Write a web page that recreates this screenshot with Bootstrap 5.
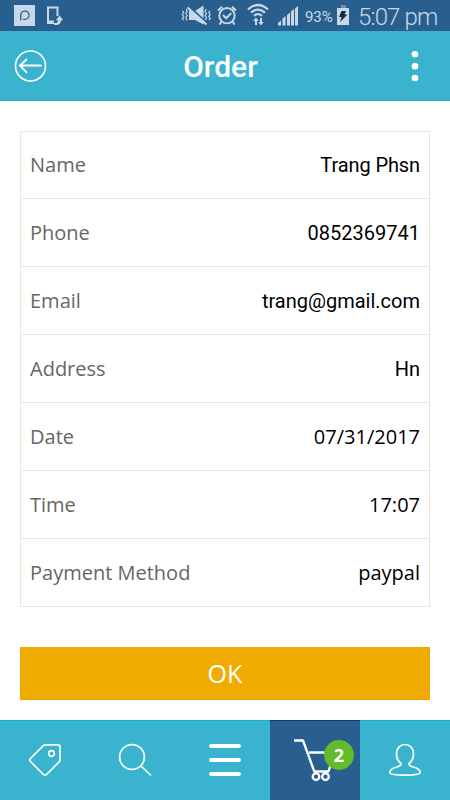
<!DOCTYPE html>
<html lang="en">
<head>
<meta charset="utf-8">
<meta name="viewport" content="width=device-width, initial-scale=1">
<title>Order</title>
<link href="https://cdn.jsdelivr.net/npm/bootstrap@5.3.0/dist/css/bootstrap.min.css" rel="stylesheet">
<style>
body{font-family:Roboto,sans-serif;height:800px;overflow:hidden;background:#fff}
svg{display:block;flex:none}
.status{height:31px;background:#295f8f;color:#c9d8e6;padding:0 12px 0 14px}
.status .pct{font-size:15px;width:28px;margin:0 4px 0 7px;line-height:35px;height:31px;letter-spacing:-.1px;white-space:nowrap}
.status .clock{font-size:24px;line-height:34px;height:31px;font-weight:300;width:80px;margin-left:9px;letter-spacing:-.85px;white-space:nowrap}
.topbar{height:70px;background:#3ab3cf;border-bottom:1px solid #14b1d1;color:#fff;padding:0 30px 0 14px}
.topbar h1{font-size:30px;font-weight:500;line-height:70px;padding:2px 0 0 7px}
.side{width:36px}
.order-list{--bs-list-group-border-color:#ebe6da;--bs-list-group-border-radius:0;margin:30px 20px 0}
.order-list .list-group-item{height:68px;padding:1px 9px 0;color:#000;font-size:20px}
.order-list .list-group-item:first-child{padding-top:0}
.order-list dt{font-family:"Open Sans",sans-serif;font-weight:400;color:#666}
.order-list dd{margin:0}
.order-list .snug{letter-spacing:-.1px}
.order-list .humanist{font-family:"Open Sans",sans-serif}
.btn-ok{--bs-btn-color:#fff;--bs-btn-bg:#f0ab00;--bs-btn-hover-bg:#dc9d00;--bs-btn-hover-color:#fff;--bs-btn-border-width:0;--bs-btn-border-radius:0;font-family:"Open Sans",sans-serif;font-size:25px;height:53px;width:410px;margin:40px 20px 0;padding:0}
.tabs{height:80px;background:#3ab3cf;border-top:1px solid #14b1d1}
.tabs .nav-link{border-radius:0;color:#fff;padding:0;height:80px;margin-top:-1px}
.tabs .nav-link.active{background:#295f8f;border-top:1px solid #0b387e}
.count{left:54px;top:19px;width:30px;height:30px;background:#63bb2c;font-family:"Open Sans",sans-serif;font-weight:700;font-size:18px;line-height:30px}
</style>
<script src="https://cdn.jsdelivr.net/npm/bootstrap@5.3.0/dist/js/bootstrap.bundle.min.js"></script>
</head>
<body class="d-flex flex-column">
<div class="status d-flex align-items-center">
  <svg width="50" height="31" viewBox="14 0 50 31" fill="none"><path fill="#c9d8e6" d="M14 5h21v21H14z"/><path d="M20.8 20.5v-5.300a4.100 4.100 0 1 1 4.100 4.100h-1.800" stroke="#295f8f" stroke-width="1.300"/><path d="M57.500 16V7.500h-9.500v15" stroke="#c9d8e6" stroke-width="2"/><path fill="#c9d8e6" d="M47 20.500h7v3.500h-7zM59.500 15.500l3.800 4.700h-2.300c0 3.500-2.500 5.300-7 4.800v-2c3 0 4-.8 4-2.800h-2.200z"/></svg>
  <svg class="ms-auto" width="117" height="31" viewBox="181 0 117 31" fill="none" stroke="#c9d8e6" stroke-width="1.600">
    <path d="M182.500 11l1.300 1.500-1.500 2 1.500 2-1.500 2 1.300 1.500M186 9l1.300 2.500-1.500 2 1.500 2-1.500 2 1.300 3M206.300 9l-1.300 2.500 1.500 2-1.500 2 1.500 2-1.300 3M210 11l-1.300 1.500 1.500 2-1.500 2 1.500 2-1.300 1.500" stroke-width="1.200"/>
    <path fill="#c9d8e6" stroke="none" d="M189 11h6l8.500-5.500v19L195 20h-6z"/><path d="M188.500 6l18 16.500" stroke="#295f8f" stroke-width="2"/><path d="M187.500 7.500l19 17" stroke-width="2.200"/>
    <circle cx="227" cy="15.700" r="7.700" stroke-width="1.900"/><path d="M223 15l3.200 3.300 5-5.200M218 10.500l4-3.800M236 10.500l-4-3.800M221.500 21.500l-2 3M232.500 21.500l2 3" stroke-width="2"/>
    <path d="M248 9.500q10-9 20 0M251 12.700q7-6 14 0M254 15.800q4-3.500 8 0" stroke-width="2.200"/><path fill="#c9d8e6" stroke="none" d="M256 17.500l2.800 3.500h-1.800v4h-2v-4h-1.800zM261 25.500l-2.800-3.500h1.800v-4h2v4h1.800z"/>
    <path fill="#c9d8e6" stroke="none" d="M278 25.500V23l3-2.500v5zM282.500 25.500v-7l3-2.500v9.500zM287 25.500V15l3-2.500v13zM291 25.500V11.500l3-2.500v16.500zM295 25.500V8.500l3-2.500v19.500z"/>
  </svg>
  <span class="pct">93%</span>
  <svg width="12" height="31" viewBox="337 0 12 31"><path fill="#7190b0" d="M341 5h5v3h-5z"/><path fill="#c9d8e6" d="M337 8h12v17h-12z"/><path fill="#102b45" d="M341.500 11h4.500l-1.500 3.500h3L340 22l1.700-5H339z"/></svg>
  <span class="clock">5:07 pm</span>
</div>
<header class="topbar d-flex align-items-center justify-content-between">
  <div class="side"><svg width="34" height="34" viewBox="14 50 34 34" fill="none" stroke="#fff"><circle cx="30.500" cy="67" r="15" stroke-width="1.600"/><path d="M41.500 66.500H20M27 60L20 66.500l7 7.300" stroke-width="1.900"/></svg></div>
  <h1 class="m-0">Order</h1>
  <svg class="side" width="36" height="34" viewBox="384 49 36 34" fill="#fff"><circle cx="415" cy="54.300" r="3.300"/><circle cx="415" cy="66.200" r="3.300"/><circle cx="415" cy="78" r="3.300"/></svg>
</header>
<dl class="list-group order-list mb-0">
  <div class="list-group-item d-flex align-items-center justify-content-between"><dt>Name</dt><dd class="snug">Trang Phsn</dd></div>
  <div class="list-group-item d-flex align-items-center justify-content-between"><dt>Phone</dt><dd>0852369741</dd></div>
  <div class="list-group-item d-flex align-items-center justify-content-between"><dt>Email</dt><dd>trang@gmail.com</dd></div>
  <div class="list-group-item d-flex align-items-center justify-content-between"><dt>Address</dt><dd>Hn</dd></div>
  <div class="list-group-item d-flex align-items-center justify-content-between"><dt>Date</dt><dd class="humanist">07/31/2017</dd></div>
  <div class="list-group-item d-flex align-items-center justify-content-between"><dt>Time</dt><dd class="humanist">17:07</dd></div>
  <div class="list-group-item d-flex align-items-center justify-content-between"><dt>Payment Method</dt><dd class="humanist">paypal</dd></div>
</dl>
<button class="btn btn-ok" type="button">OK</button>
<nav class="tabs nav nav-fill mt-auto row row-cols-5 g-0">
  <a class="nav-link col" href="#" aria-label="Offers"><svg width="90" height="80" viewBox="0 720 90 80" fill="none" stroke="#fff" stroke-width="1.700"><path d="M45.500 744.800H58q2 0 2 2V760q0 1-.7 1.700l-12.600 12.600q-1.700 1.700-3.400 0L30.500 761.500q-1.500-1.500 0-3L43.500 745.500q.8-.7 2-.7z"/><circle cx="51.500" cy="753.500" r="2.800"/></svg></a>
  <a class="nav-link col" href="#" aria-label="Search"><svg width="90" height="80" viewBox="90 720 90 80" fill="none" stroke="#fff" stroke-width="1.700"><circle cx="132" cy="757" r="12.400"/><path d="M141 766l10 9.500"/></svg></a>
  <a class="nav-link col" href="#" aria-label="Menu"><svg width="90" height="80" viewBox="180 720 90 80" fill="none" stroke="#fff" stroke-width="3.800" stroke-linecap="round"><path d="M211 746h28M211 760h28M211 774h28"/></svg></a>
  <a class="nav-link col active position-relative" href="#" aria-label="Cart"><svg width="90" height="79" viewBox="270 721 90 79" fill="none" stroke="#fff" stroke-width="2.300" stroke-linejoin="round"><path d="M294 740.500h9l11.300 31h14.200l6-19H309"/><circle cx="316" cy="776.700" r="3.300"/><circle cx="325.500" cy="776.700" r="3.300"/></svg><span class="count position-absolute rounded-circle text-center">2</span></a>
  <a class="nav-link col" href="#" aria-label="Account"><svg width="90" height="80" viewBox="360 720 90 80" fill="none" stroke="#fff" stroke-width="1.700"><path d="M401 763.500c-3-2.300-4.500-5.500-4.500-9.500 0-5.500 3.500-9.500 8.500-9.500s8.500 4 8.500 9.500c0 4-1.500 7.200-4.500 9.500q0 2.500 4 3.500c5 1.200 7 2.500 7.300 5.500 0 1.500-5 2.600-15.300 2.600s-15.300-1.100-15.300-2.600c.3-3 2.300-4.300 7.300-5.500q4-1 4-3.500z"/></svg></a>
</nav>
</body>
</html>
